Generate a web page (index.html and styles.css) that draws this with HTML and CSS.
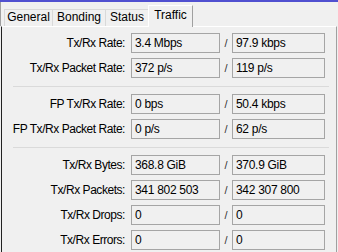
FILE: index.html
```html
<!DOCTYPE html>
<html lang="en">
<head>
    <meta charset="UTF-8">
    <title>Interface - Traffic</title>
    <link rel="stylesheet" href="styles.css">
</head>
<body>

    <div class="topbar"></div>

    <div class="tabs">
        <div class="tab tab-general">General</div>
        <div class="tab tab-bonding">Bonding</div>
        <div class="tab tab-status">Status</div>
        <div class="tab tab-traffic active">Traffic</div>
    </div>

    <div class="panel">
        <div class="group">
            <div class="row">
                <label>Tx/Rx Rate:</label>
                <div class="field">3.4 Mbps</div>
                <span class="slash">/</span>
                <div class="field">97.9 kbps</div>
            </div>
            <div class="row">
                <label>Tx/Rx Packet Rate:</label>
                <div class="field">372 p/s</div>
                <span class="slash">/</span>
                <div class="field">119 p/s</div>
            </div>
        </div>

        <div class="sep"></div>

        <div class="group">
            <div class="row">
                <label>FP Tx/Rx Rate:</label>
                <div class="field">0 bps</div>
                <span class="slash">/</span>
                <div class="field">50.4 kbps</div>
            </div>
            <div class="row">
                <label>FP Tx/Rx Packet Rate:</label>
                <div class="field">0 p/s</div>
                <span class="slash">/</span>
                <div class="field">62 p/s</div>
            </div>
        </div>

        <div class="sep"></div>

        <div class="group">
            <div class="row">
                <label>Tx/Rx Bytes:</label>
                <div class="field">368.8 GiB</div>
                <span class="slash">/</span>
                <div class="field">370.9 GiB</div>
            </div>
            <div class="row">
                <label>Tx/Rx Packets:</label>
                <div class="field">341 802 503</div>
                <span class="slash">/</span>
                <div class="field">342 307 800</div>
            </div>
            <div class="row">
                <label>Tx/Rx Drops:</label>
                <div class="field">0</div>
                <span class="slash">/</span>
                <div class="field">0</div>
            </div>
            <div class="row">
                <label>Tx/Rx Errors:</label>
                <div class="field">0</div>
                <span class="slash">/</span>
                <div class="field">0</div>
            </div>
        </div>
    </div>

</body>
</html>
```

FILE: styles.css
```css
body {
    font-family: "Liberation Sans", Arial, sans-serif;
    font-size: 11px;
    color: #000;
    margin: 0;
    padding: 0;
    background-color: #f0f0f0;
    overflow: hidden;
}

.topbar {
    height: 2px;
    background-color: #5050d0;
}

.tabs {
    display: flex;
    align-items: flex-end;
    height: 24px;
    padding-left: 3px;
    border-left: 1px solid #a0a0a0;
}

.tab {
    height: 17px;
    line-height: 15px;
    text-align: center;
    font-size: 12px;
    border: 1px solid #d9d9d9;
    border-bottom: none;
    margin-right: -1px;
    box-sizing: border-box;
}

.tab-general { width: 49px; }
.tab-bonding { width: 54px; }
.tab-status { width: 44px; }

.tab.active {
    width: 45px;
    height: 22px;
    line-height: 19px;
    border-top: 1px solid #fff;
    border-left: 1px solid #fff;
    border-right: 1px solid #a0a0a0;
    position: relative;
    top: 1px;
    background-color: #f0f0f0;
}

.panel {
    margin: 0 1px;
    border-top: 1px solid #fff;
    border-left: 1px solid #222;
    border-right: 1px solid #a0a0a0;
    padding-top: 6px;
    min-height: 230px;
}

.group {
    display: flex;
    flex-direction: column;
    gap: 5px;
}

.row {
    display: grid;
    grid-template-columns: 123px 95px 12px 93px;
    height: 20px;
    align-items: center;
}

.row label {
    text-align: right;
    white-space: nowrap;
    font-size: 12px;
    letter-spacing: -0.45px;
}

.field {
    height: 20px;
    line-height: 18px;
    border: 1px solid #a5a5a5;
    padding-left: 3px;
    box-sizing: border-box;
    background-color: #f0f0f0;
    white-space: nowrap;
    overflow: hidden;
    font-size: 12px;
    letter-spacing: -0.3px;
}

.row .field:first-of-type {
    margin-left: 6px;
    width: 89px;
}

.slash {
    text-align: center;
    color: #333;
}

.sep {
    height: 1px;
    margin: 8px 7px 7px 11px;
    background-color: #dadada;
}
```
